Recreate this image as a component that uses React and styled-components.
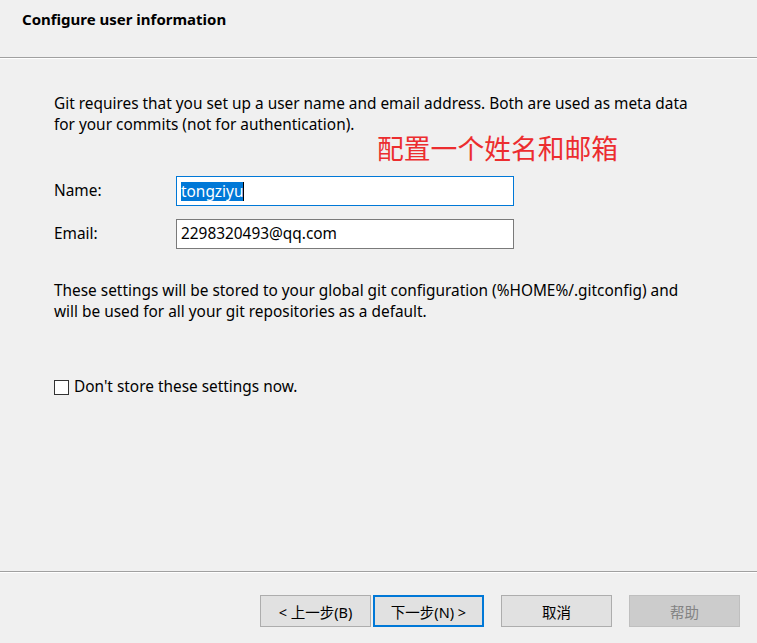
import styled, { createGlobalStyle } from 'styled-components';

const GlobalStyle = createGlobalStyle`
  html, body { margin: 0; padding: 0; background: #f0f0f0; }
  body { font-family: "Noto Sans", "Noto Sans CJK SC", sans-serif; color: #000; }
`;

const Wizard = styled.div`
  width: 757px;
  height: 643px;
  display: flex;
  flex-direction: column;
  background: #f0f0f0;
  overflow: hidden;
`;

const Header = styled.div`
  height: 58px;
  padding: 8px 0 0 22px;
  box-sizing: border-box;
  border-bottom: 1px solid #a0a0a0;
  font-size: 15px;
  font-weight: 700;
  line-height: 22px;
`;

const Divider = styled.div`
  height: 1px;
  background: #fff;
`;

const Body = styled.div`
  position: relative;
  flex: 1;
  padding: 35px 0 0 54px;
  box-sizing: border-box;
  font-size: 15.4px;
  line-height: 20.5px;
`;

const Paragraph = styled.p`
  margin: 0;
  width: 645px;
`;

const Note = styled.div`
  position: absolute;
  left: 377px;
  top: 75px;
  font-family: "Noto Sans CJK SC", sans-serif;
  font-size: 26.8px;
  line-height: 28px;
  color: #ec2d2f;
`;

const Form = styled.div`
  display: grid;
  grid-template-columns: 122px 338px;
  row-gap: 13px;
  margin-top: 41px;
  align-items: center;
`;

const Label = styled.label``;

const Field = styled.div`
  height: 30px;
  box-sizing: border-box;
  border: 1px solid ${({ focused }) => (focused ? '#0078d7' : '#7a7a7a')};
  background: #fff;
  display: flex;
  align-items: center;
  padding-left: 4px;
  font-size: 15.4px;
`;

const Selected = styled.span`
  background: #0078d7;
  color: #fff;
  line-height: 19px;
  border-right: 1px solid #000;
`;

const SecondParagraph = styled(Paragraph)`
  margin-top: 32px;
`;

const CheckRow = styled.label`
  display: flex;
  align-items: center;
  gap: 5px;
  margin-top: 55px;
`;

const Box = styled.span`
  width: 13px;
  height: 13px;
  border: 1px solid #333;
  background: #fff;
`;

const Footer = styled.div`
  height: 71px;
  border-top: 1px solid #a0a0a0;
  display: flex;
  flex-direction: column;
`;

const Buttons = styled.div`
  display: flex;
  padding: 22px 0 0 260px;
`;

const Button = styled.button`
  width: 111px;
  height: 32px;
  box-sizing: border-box;
  margin-right: ${({ gap }) => gap}px;
  font-family: "Noto Sans", "Noto Sans CJK SC", sans-serif;
  font-size: 14.5px;
  background: ${({ disabled }) => (disabled ? '#cccccc' : '#e1e1e1')};
  color: ${({ disabled }) => (disabled ? '#838383' : '#000')};
  border: ${({ primary, disabled }) =>
    primary ? '2px solid #0078d7' : disabled ? '1px solid #bfbfbf' : '1px solid #adadad'};
  padding: 0;
`;

export default function App() {
  return (
    <Wizard>
      <GlobalStyle />
      <Header>Configure user information</Header>
      <Divider />
      <Body>
        <Paragraph>
          Git requires that you set up a user name and email address. Both are used as meta data
          for your commits (not for authentication).
        </Paragraph>
        <Note>配置一个姓名和邮箱</Note>
        <Form>
          <Label>Name:</Label>
          <Field focused>
            <Selected>tongziyu</Selected>
          </Field>
          <Label>Email:</Label>
          <Field>2298320493@qq.com</Field>
        </Form>
        <SecondParagraph>
          These settings will be stored to your global git configuration (%HOME%/.gitconfig) and
          will be used for all your git repositories as a default.
        </SecondParagraph>
        <CheckRow>
          <Box />
          Don't store these settings now.
        </CheckRow>
      </Body>
      <Footer>
        <Divider />
        <Buttons>
          <Button gap={2}>&lt; 上一步(B)</Button>
          <Button gap={17} primary>下一步(N) &gt;</Button>
          <Button gap={17}>取消</Button>
          <Button disabled>帮助</Button>
        </Buttons>
      </Footer>
    </Wizard>
  );
}
